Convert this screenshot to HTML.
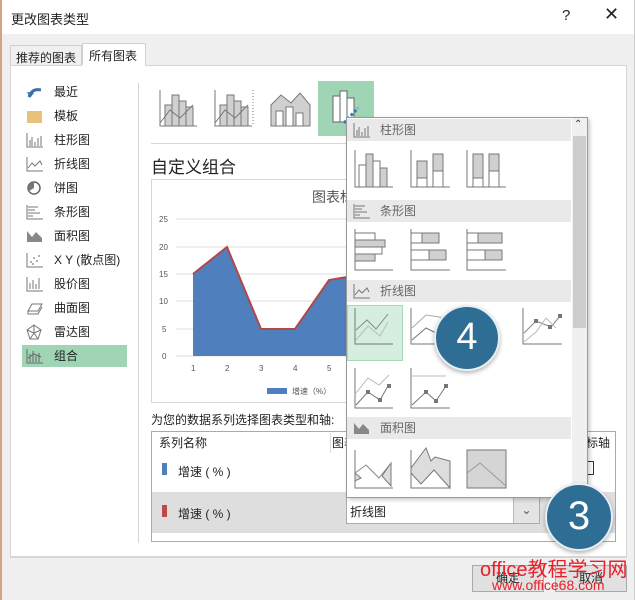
<!DOCTYPE html>
<html><head><meta charset="utf-8"><style>
*{margin:0;padding:0;box-sizing:border-box}
body{width:635px;height:600px;position:relative;overflow:hidden;background:#f0f0f0;font-family:"Liberation Sans","Noto Sans CJK SC",sans-serif;font-size:12px;color:#222}
.a{position:absolute}
.li{position:absolute;left:22px;width:105px;height:22px;line-height:22px}
.li span{position:absolute;left:32px}
.li svg{position:absolute;left:4px;top:3px}
.hdr{position:absolute;left:347px;width:224px;height:22px;background:#e9e9e9;line-height:22px;color:#666}
.hdr span{position:absolute;left:33px}
</style></head><body>
<div class="a" style="left:0;top:0;width:635px;height:600px;border-left:2px solid #d8a27e;border-right:1px solid #ccc"></div>
<div class="a" style="left:2px;top:0;width:632px;height:34px;background:#fff"></div>
<div class="a" style="left:11px;top:9px;font-size:13px">更改图表类型</div>
<div class="a" style="left:562px;top:7px;font-size:15px">?</div>
<div class="a" style="left:604px;top:4px;font-size:18px">✕</div>
<div class="a" style="left:10px;top:45px;width:72px;height:21px;border:1px solid #d0d0d0;background:#f0f0f0;padding:3px 5px">推荐的图表</div>
<div class="a" style="left:82px;top:43px;width:64px;height:23px;border:1px solid #d0d0d0;border-bottom:none;background:#fff;padding:3px 6px">所有图表</div>
<div class="a" style="left:10px;top:65px;width:617px;height:492px;background:#fff;border:1px solid #d6d6d6;border-top:none"></div>
<div class="a" style="left:10px;top:65px;width:617px;height:1px;background:#d6d6d6"></div>
<div class="a" style="left:82px;top:65px;width:63px;height:1px;background:#fff"></div>
<div class="a" style="left:138px;top:83px;width:1px;height:460px;background:#d6d6d6"></div>

<div class="li" style="top:81px"><svg width="18" height="16"><path d="M3 13 Q6 4 15 6" stroke="#3a6fb0" stroke-width="3" fill="none"/><path d="M1 8 L4 14 L8 9z" fill="#3a6fb0"/></svg><span>最近</span></div>
<div class="li" style="top:105px"><svg width="18" height="16"><rect x="1" y="3" width="15" height="12" fill="#e8c17a"/></svg><span>模板</span></div>
<div class="li" style="top:129px"><svg width="18" height="16" fill="none" stroke="#777"><path d="M1 1V15H17M4 14V8M6 14V5M9 14V10M12 14V6M15 14V4"/></svg><span>柱形图</span></div>
<div class="li" style="top:153px"><svg width="18" height="16" fill="none" stroke="#777"><path d="M1 1V15H17M2 12L6 7L9 10L14 5L16 9"/></svg><span>折线图</span></div>
<div class="li" style="top:177px"><svg width="18" height="16"><circle cx="8" cy="8" r="6" fill="#fff" stroke="#666" stroke-width="1.5"/><path d="M8 8V2A6 6 0 0 0 3 11z" fill="#777"/></svg><span>饼图</span></div>
<div class="li" style="top:201px"><svg width="18" height="16" fill="none" stroke="#777"><path d="M1 1V15H17M2 3H12M2 6H9M2 9H14M2 12H7"/></svg><span>条形图</span></div>
<div class="li" style="top:225px"><svg width="18" height="16"><path d="M1 14V3L6 9L10 4L16 10V14z" fill="#888"/></svg><span>面积图</span></div>
<div class="li" style="top:249px"><svg width="18" height="16" fill="#999"><path d="M1 1V15H17" stroke="#777" fill="none"/><circle cx="5" cy="10" r="1"/><circle cx="8" cy="6" r="1"/><circle cx="11" cy="9" r="1"/><circle cx="13" cy="4" r="1"/><circle cx="7" cy="12" r="1"/></svg><span>X Y (散点图)</span></div>
<div class="li" style="top:273px"><svg width="18" height="16" fill="none" stroke="#777"><path d="M1 1V15H17M4 13V7M7 13V4M10 13V8M13 13V2"/></svg><span>股价图</span></div>
<div class="li" style="top:297px"><svg width="18" height="16" fill="none" stroke="#777"><path d="M2 11L6 4H16L12 11zM2 11V14H12L16 7"/></svg><span>曲面图</span></div>
<div class="li" style="top:321px"><svg width="18" height="16" fill="none" stroke="#777"><path d="M8 1L15 6L12 15H4L1 6z M8 1V9L15 6M8 9L12 15M8 9L4 15M8 9L1 6"/></svg><span>雷达图</span></div>
<div class="li" style="top:345px;background:#9fd5b5"><svg width="18" height="16" fill="none" stroke="#666"><path d="M1 1V15H17M4 14V6M7 14V3M10 14V8M13 14V5M2 10L8 6L15 9"/></svg><span>组合</span></div>

<svg class="a" style="left:155px;top:85px" width="230" height="50" fill="#d0d0d0" stroke="#777">
<path d="M5 5V41H42" fill="none"/><rect x="10" y="20" width="7" height="21"/><rect x="17" y="10" width="7" height="31"/><rect x="24" y="16" width="7" height="25"/><rect x="31" y="22" width="7" height="19"/><path d="M5 38L15 25L25 33L38 20" fill="none"/>
<path d="M60 5V41H97" fill="none"/><rect x="65" y="20" width="7" height="21"/><rect x="72" y="10" width="7" height="31"/><rect x="79" y="16" width="7" height="25"/><rect x="86" y="22" width="7" height="19"/><path d="M60 38L70 25L80 33L93 20" fill="none"/><path d="M98 5V41" stroke-dasharray="1 2" fill="none"/>
<path d="M116 41V20L126 10L136 18L145 8L155 20V41z"/><rect x="121" y="26" width="7" height="15" fill="#fff"/><rect x="131" y="22" width="7" height="19" fill="#fff"/><rect x="141" y="28" width="7" height="13" fill="#fff"/>
</svg>
<div class="a" style="left:318px;top:81px;width:56px;height:55px;background:#9fd5b5"></div>
<svg class="a" style="left:330px;top:88px" width="40" height="40" fill="#fff" stroke="#666"><rect x="3" y="8" width="7" height="26"/><rect x="10" y="3" width="7" height="31"/><rect x="17" y="10" width="7" height="24"/><path d="M14 35L28 20" stroke="#3a7ab8" stroke-width="3" stroke-dasharray="3 2"/></svg>
<div class="a" style="left:151px;top:143px;width:255px;height:1px;background:#d6d6d6"></div>
<div class="a" style="left:151px;top:153px;font-size:17px">自定义组合</div>

<div class="a" style="left:151px;top:179px;width:200px;height:224px;border:1px solid #d6d6d6;border-right:none"></div>
<div class="a" style="left:312px;top:187px;font-size:14px;color:#555">图表标题</div>
<svg class="a" style="left:151px;top:180px" width="196" height="222" font-size="8" fill="#555" font-family="Liberation Sans">
<g stroke="#ddd"><path d="M25 39H196M25 67H196M25 94H196M25 121H196M25 149H196M25 176H196"/></g>
<text x="8" y="42">25</text><text x="8" y="70">20</text><text x="8" y="97">15</text><text x="8" y="124">10</text><text x="11" y="152">5</text><text x="11" y="179">0</text>
<path d="M42 176V94L76 67L110 149L144 149L178 100L196 97V176z" fill="#4f7fbd"/>
<path d="M42 94L76 67L110 149L144 149L178 100L196 97" stroke="#b0484a" stroke-width="2" fill="none"/>
<text x="40" y="191">1</text><text x="74" y="191">2</text><text x="108" y="191">3</text><text x="142" y="191">4</text><text x="176" y="191">5</text>
<rect x="116" y="208" width="20" height="6" fill="#4f7fbd"/><text x="141" y="214">增速（%）</text>
</svg>
<div class="a" style="left:151px;top:411px">为您的数据系列选择图表类型和轴:</div>
<div class="a" style="left:151px;top:431px;width:465px;height:111px;border:1px solid #aaa;background:#fff"></div>
<div class="a" style="left:159px;top:434px">系列名称</div>
<div class="a" style="left:330px;top:433px;width:1px;height:20px;background:#ddd"></div>
<div class="a" style="left:332px;top:434px">图表</div>
<div class="a" style="left:586px;top:434px">标轴</div>
<div class="a" style="left:588px;top:461px;width:6px;height:14px;border:1px solid #333;border-left:none"></div>
<div class="a" style="left:162px;top:463px;width:5px;height:12px;background:#4f7fbd"></div>
<div class="a" style="left:178px;top:463px">增速 ( % )</div>
<div class="a" style="left:152px;top:492px;width:463px;height:41px;background:#dedede"></div>
<div class="a" style="left:162px;top:505px;width:5px;height:12px;background:#c0484a"></div>
<div class="a" style="left:178px;top:505px">增速 ( % )</div>
<div class="a" style="left:346px;top:497px;width:194px;height:27px;border:1px solid #aaa;background:#fff;padding:5px 3px">折线图</div>
<div class="a" style="left:513px;top:498px;width:26px;height:25px;background:#e4e4e4;border-left:1px solid #bbb;text-align:center;line-height:25px;color:#555">⌄</div>
<div class="a" style="left:10px;top:557px;width:617px;height:1px;background:#d6d6d6"></div>
<div class="a" style="left:472px;top:565px;width:72px;height:27px;border:1px solid #aaa;background:#e1e1e1;text-align:center;line-height:25px">确定</div>
<div class="a" style="left:555px;top:565px;width:72px;height:27px;border:1px solid #aaa;background:#e1e1e1;text-align:center;line-height:25px">取消</div>

<div class="a" style="left:346px;top:117px;width:242px;height:381px;background:#fff;border:1px solid #999;box-shadow:2px 2px 4px rgba(0,0,0,.2)"></div>
<div class="a" style="left:572px;top:118px;width:15px;height:379px;background:#f0f0f0"></div>
<div class="a" style="left:573px;top:136px;width:13px;height:192px;background:#cdcdcd"></div>
<div class="a" style="left:574px;top:119px;font-size:10px;color:#333">⌃</div>
<div class="hdr" style="top:119px"><svg class="a" style="left:6px;top:3px" width="18" height="16" fill="none" stroke="#777"><path d="M1 1V15H17M4 14V8M6 14V5M9 14V10M12 14V6M15 14V4"/></svg><span>柱形图</span></div>
<div class="hdr" style="top:200px"><svg class="a" style="left:6px;top:3px" width="18" height="16" fill="none" stroke="#777"><path d="M1 1V15H17M2 3H12M2 6H9M2 9H14M2 12H7"/></svg><span>条形图</span></div>
<div class="hdr" style="top:280px"><svg class="a" style="left:6px;top:3px" width="18" height="16" fill="none" stroke="#777"><path d="M1 1V15H17M2 12L6 7L9 10L14 5L16 9"/></svg><span>折线图</span></div>
<div class="hdr" style="top:417px"><svg class="a" style="left:6px;top:3px" width="18" height="16"><path d="M1 14V3L6 9L10 4L16 10V14z" fill="#888"/></svg><span>面积图</span></div>
<div class="a" style="left:347px;top:305px;width:56px;height:56px;background:#d5eedf;border:1px solid #a8d8b9"></div>
<svg class="a" style="left:346px;top:118px" width="226" height="378" fill="#d0d0d0" stroke="#777">
<g><path d="M9 32V69H47" fill="none"/><rect x="13" y="47" width="7" height="22" fill="#fff"/><rect x="20" y="36" width="7" height="33"/><rect x="27" y="43" width="7" height="26" fill="#fff"/><rect x="34" y="50" width="7" height="19"/>
<path d="M65 32V69H104" fill="none"/><rect x="71" y="43" width="10" height="17"/><rect x="71" y="60" width="10" height="9" fill="#fff"/><rect x="87" y="36" width="10" height="17"/><rect x="87" y="53" width="10" height="16" fill="#fff"/>
<path d="M121 32V69H160" fill="none"/><rect x="127" y="36" width="10" height="24"/><rect x="127" y="60" width="10" height="9" fill="#fff"/><rect x="143" y="36" width="10" height="17"/><rect x="143" y="53" width="10" height="16" fill="#fff"/></g>
<g><path d="M9 111V152H47" fill="none"/><rect x="9" y="115" width="20" height="7" fill="#fff"/><rect x="9" y="122" width="30" height="7"/><rect x="9" y="129" width="27" height="7" fill="#fff"/><rect x="9" y="136" width="20" height="7"/>
<path d="M65 111V152H104" fill="none"/><rect x="65" y="115" width="11" height="10" fill="#fff"/><rect x="76" y="115" width="17" height="10"/><rect x="65" y="132" width="18" height="10" fill="#fff"/><rect x="83" y="132" width="17" height="10"/>
<path d="M121 111V152H160" fill="none"/><rect x="121" y="115" width="11" height="10" fill="#fff"/><rect x="132" y="115" width="24" height="10"/><rect x="121" y="132" width="18" height="10" fill="#fff"/><rect x="139" y="132" width="17" height="10"/></g>
<g fill="none"><path d="M9 190V226H47"/><path d="M10 212L21 202L30 211L42 196" stroke="#888"/><path d="M10 222L22 208L34 218L42 204" stroke="#bbb"/>
<path d="M65 190V226H104"/><path d="M66 210L80 197L100 200" stroke="#aaa"/><path d="M66 222L80 210L100 220"/>
<path d="M177 190V226H216"/><path d="M178 215L190 203L205 209L214 198" stroke="#888"/><path d="M178 224L190 214L200 200L210 210" stroke="#bbb"/>
<path d="M9 250V290H47"/><path d="M10 275L22 260L33 267L43 257" stroke="#bbb"/><path d="M10 287L22 274L34 282L42 268"/>
<path d="M65 250V290H104"/><path d="M66 258H100" stroke="#bbb"/><path d="M66 287L80 274L90 283L100 268"/></g>
<g stroke="none" fill="#777"><rect x="188" y="201" width="4" height="4"/><rect x="202" y="207" width="4" height="4"/><rect x="212" y="196" width="4" height="4"/><rect x="20" y="272" width="4" height="4"/><rect x="32" y="280" width="4" height="4"/><rect x="41" y="266" width="4" height="4"/><rect x="78" y="272" width="4" height="4"/><rect x="88" y="281" width="4" height="4"/><rect x="98" y="266" width="4" height="4"/></g>
<g fill="#ddd"><path d="M9 332V370H47" fill="none"/><path d="M9 355L15 360L9 363z M36 358L45 345V368z"/><path d="M9 355L20 347L33 360L45 345" fill="none" stroke="#888"/>
<path d="M65 332V370H104" fill="none"/><path d="M65 350L80 330L85 343L89 339L104 343V370L88 352L75 366L65 355z"/>
<path d="M121 332H160V370H121z" fill="#d5d5d5"/><path d="M121 355L134 345L160 368" fill="none" stroke="#999"/></g>
</svg>

<div class="a" style="left:434px;top:305px;width:66px;height:66px;border-radius:50%;background:#2f6e94;border:2px solid #e8eef2;color:#fff;font-size:38px;text-align:center;line-height:60px;box-shadow:0 2px 4px rgba(0,0,0,.3)">4</div>
<div class="a" style="left:545px;top:483px;width:68px;height:68px;border-radius:50%;background:#2f6e94;border:2px solid #e8eef2;color:#fff;font-size:40px;text-align:center;line-height:62px;box-shadow:0 2px 4px rgba(0,0,0,.3)">3</div>
<div class="a" style="left:480px;top:553px;font-size:20px;color:#e8202a">office教程学习网</div>
<div class="a" style="left:492px;top:577px;font-size:14px;color:#e8202a">www.office68.com</div>
</body></html>
